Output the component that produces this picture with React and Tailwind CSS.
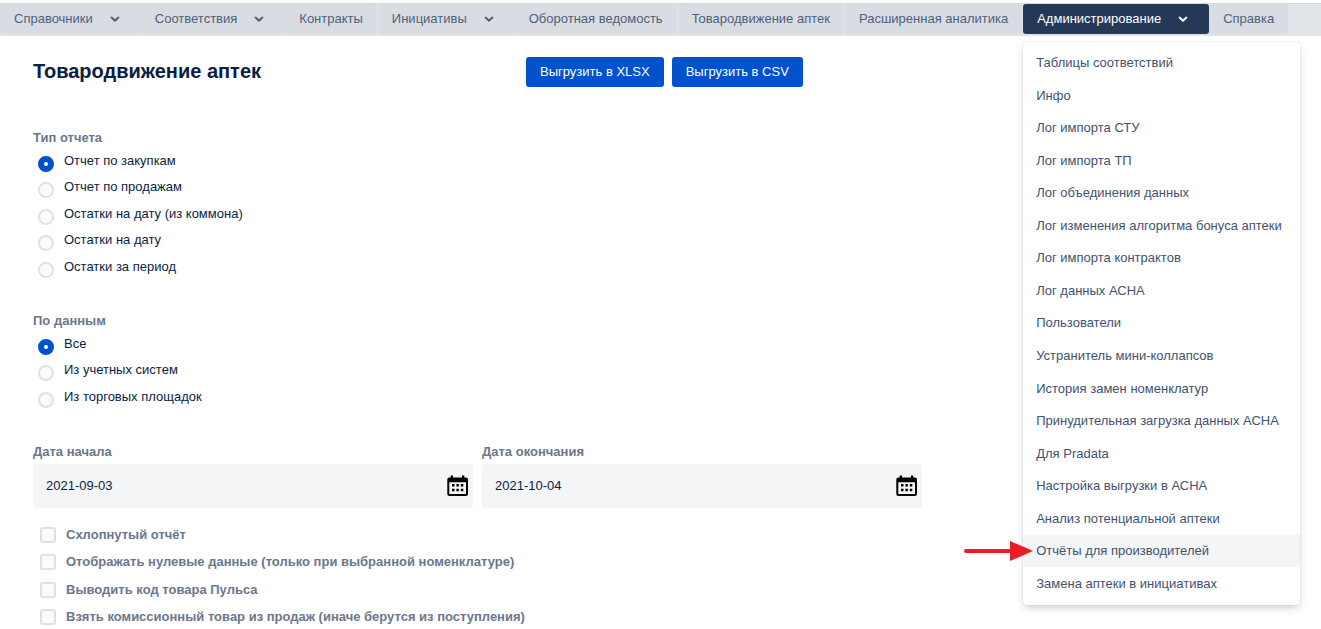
import React, { useState } from "react";

const NAV_ITEMS = [
  { title: "Справочники", dropdown: true },
  { title: "Соответствия", dropdown: true },
  { title: "Контракты" },
  { title: "Инициативы", dropdown: true },
  { title: "Оборотная ведомость" },
  { title: "Товародвижение аптек" },
  { title: "Расширенная аналитика" },
  { title: "Администрирование", dropdown: true, active: true },
  { title: "Справка" },
];

const ADMIN_ITEMS = [
  "Таблицы соответствий",
  "Инфо",
  "Лог импорта СТУ",
  "Лог импорта ТП",
  "Лог объединения данных",
  "Лог изменения алгоритма бонуса аптеки",
  "Лог импорта контрактов",
  "Лог данных АСНА",
  "Пользователи",
  "Устранитель мини-коллапсов",
  "История замен номенклатур",
  "Принудительная загрузка данных АСНА",
  "Для Pradata",
  "Настройка выгрузки в АСНА",
  "Анализ потенциальной аптеки",
  "Отчёты для производителей",
  "Замена аптеки в инициативах",
];

const REPORT_TYPES = [
  "Отчет по закупкам",
  "Отчет по продажам",
  "Остатки на дату (из коммона)",
  "Остатки на дату",
  "Остатки за период",
];

const SOURCES = ["Все", "Из учетных систем", "Из торговых площадок"];

const OPTIONS = [
  "Схлопнутый отчёт",
  "Отображать нулевые данные (только при выбранной номенклатуре)",
  "Выводить код товара Пульса",
  "Взять комиссионный товар из продаж (иначе берутся из поступления)",
];

const ChevronIcon = () => (
  <svg width="24" height="24" viewBox="0 0 24 24" fill="none" aria-hidden="true">
    <path
      d="M8.600 10.600L12 13.800l3.400-3.200"
      stroke="currentColor"
      strokeWidth="2"
      strokeLinecap="round"
      strokeLinejoin="round"
    />
  </svg>
);

const CalendarIcon = () => (
  <svg width="22" height="22" viewBox="0 0 22 22" aria-hidden="true">
    <path
      fill="#000"
      fillRule="evenodd"
      d="M4.700 .5h2.300v2h9V.5h2.300v2H20a2 2 0 0 1 2 2v14.500a2 2 0 0 1-2 2H3.300a2 2 0 0 1-2-2V4.500a2 2 0 0 1 2-2h1.400zM3.300 7.300V19H20V7.300z"
    />
    <path
      fill="#000"
      d="M6 9h2.500v2.500H6zM10.400 9h2.500v2.500h-2.500zM14.800 9h2.500v2.500h-2.500zM6 13.800h2.500v2.500H6zM10.400 13.800h2.500v2.500h-2.500zM14.800 13.800h2.500v2.500h-2.500z"
    />
  </svg>
);

const NavBar = () => (
  <nav className="mt-[3px] flex h-[33px] items-start border-t border-[#d5d9df] bg-[#e1e4e9] text-[#505f79]">
    {NAV_ITEMS.map((item) => (
      <div key={item.title} className={item.dropdown ? "relative shrink-0" : "mr-px shrink-0"}>
        <button
          type="button"
          className={
            item.active
              ? "flex h-[30px] items-center gap-[10px] rounded-[3px] bg-[#253858] px-[14px] text-white"
              : "flex h-[30px] items-center gap-[10px] rounded-[3px] bg-[#d9dde3] px-[14px]"
          }
        >
          {item.title}
          {item.dropdown && <ChevronIcon />}
        </button>
        {item.active && <AdminMenu />}
      </div>
    ))}
  </nav>
);

const AdminMenu = () => (
  <div className="absolute top-[38px] left-0 z-10 grid h-[563px] w-[277px] auto-rows-fr rounded-[3px] bg-white py-[5px] text-[#42526e] shadow-[0_4px_8px_-2px_rgba(9,30,66,0.25),0_0_1px_rgba(9,30,66,0.31)]">
    {ADMIN_ITEMS.map((title) => (
      <a
        key={title}
        href="#"
        className={
          title === "Отчёты для производителей"
            ? "relative flex items-center bg-[#f4f5f7] px-[13px] whitespace-nowrap"
            : "flex items-center px-[13px] whitespace-nowrap"
        }
      >
        {title}
        {title === "Отчёты для производителей" && <Arrow />}
      </a>
    ))}
  </div>
);

const Arrow = () => (
  <svg
    className="absolute right-full -mr-[10px]"
    width="69"
    height="20"
    viewBox="0 0 69 20"
    aria-hidden="true"
  >
    <path d="M2 10h46" stroke="#ed1c24" strokeWidth="4" strokeLinecap="round" />
    <path d="M46 0l23 10-23 10z" fill="#ed1c24" />
  </svg>
);

const RadioGroup = ({ name, legend, items, listClass }) => {
  const [value, setValue] = useState(items[0]);

  return (
    <fieldset>
      <legend className="font-bold text-[#6b778c]">{legend}</legend>
      <div className={listClass}>
        {items.map((item) => (
          <label key={item} className="flex gap-[10px] pl-[5px]">
            <input
              type="radio"
              name={name}
              checked={value === item}
              onChange={() => setValue(item)}
              className="mt-2 size-4 shrink-0 appearance-none rounded-full border-2 border-[#dfe1e6] bg-[#fafbfc] checked:border-[6px] checked:border-[#0052cc] checked:bg-white"
            />
            <span className="mt-[3px]">{item}</span>
          </label>
        ))}
      </div>
    </fieldset>
  );
};

const DateField = ({ id, label, value }) => (
  <div className="w-[440px]">
    <label htmlFor={id} className="font-bold text-[#6b778c]">
      {label}
    </label>
    <div className="mt-[2px] flex h-11 items-center rounded-[3px] bg-[#f4f5f7] pr-[5px] pl-[13px]">
      <input id={id} type="text" defaultValue={value} className="min-w-0 flex-1 bg-transparent outline-none" />
      <CalendarIcon />
    </div>
  </div>
);

const App = () => {
  return (
    <div className="flow-root bg-white font-['Liberation_Sans',Arial,sans-serif] text-[13px] leading-5 text-[#091e42]">
      <NavBar />
      <main className="px-[33px]">
        <div className="flex pt-[21px]">
          <h1 className="w-[493px] text-[20px] leading-7 font-bold">Товародвижение аптек</h1>
          <div className="flex gap-2">
            <button type="button" className="h-[30px] rounded-[3px] bg-[#0052cc] px-[14px] text-white">
              Выгрузить в XLSX
            </button>
            <button type="button" className="h-[30px] rounded-[3px] bg-[#0052cc] px-[14px] text-white">
              Выгрузить в CSV
            </button>
          </div>
        </div>

        <div className="mt-[41px]">
          <RadioGroup name="type" legend="Тип отчета" items={REPORT_TYPES} listClass="grid h-[132px] auto-rows-fr" />
        </div>
        <div className="mt-[31px]">
          <RadioGroup name="source" legend="По данным" items={SOURCES} listClass="grid h-[79px] auto-rows-fr" />
        </div>

        <div className="mt-8 flex gap-[9px]">
          <DateField id="start" label="Дата начала" value="2021-09-03" />
          <DateField id="end" label="Дата окончания" value="2021-10-04" />
        </div>

        <div className="mt-[13px] grid h-[110px] auto-rows-fr">
          {OPTIONS.map((option) => (
            <label key={option} className="flex items-center gap-[10px] pl-[7px] font-bold text-[#6b778c]">
              <input
                type="checkbox"
                className="size-4 shrink-0 appearance-none rounded-[3px] border-2 border-[#dfe1e6] bg-[#fafbfc] checked:bg-[#0052cc]"
              />
              {option}
            </label>
          ))}
        </div>
      </main>
    </div>
  );
};

export default App;
